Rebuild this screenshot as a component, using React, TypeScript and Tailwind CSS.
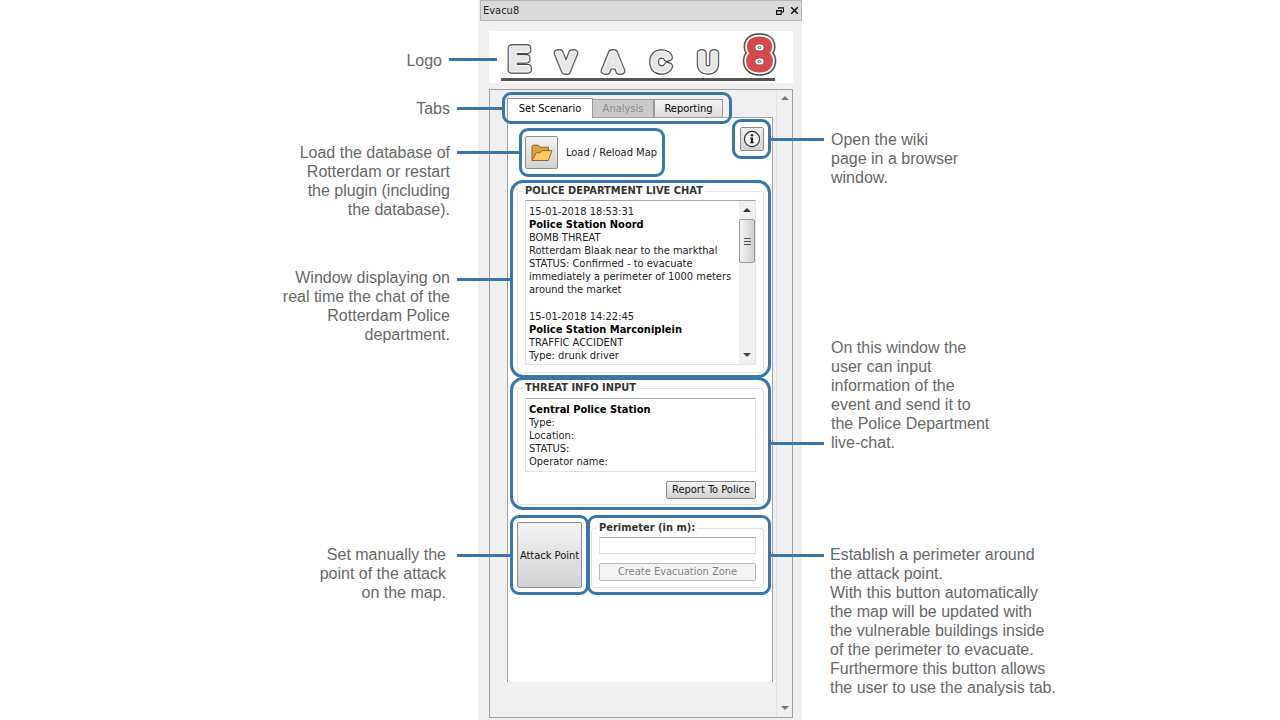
import type { ReactNode } from "react";

const ring = "border-3 border-[#3a75ab]";
const connector = "absolute h-[3px] bg-[#3a75ab]";
const buttonFace =
  "border border-[#8c8c8c] bg-linear-to-b from-[#f3f3f3] to-[#d2d2d2] text-[#111]";

function Note({ lines, className }: { lines: string[]; className: string }) {
  return (
    <p className={className}>
      {lines.map((line) => (
        <span key={line} className="block whitespace-nowrap">
          {line}
        </span>
      ))}
    </p>
  );
}

function Group({ title, className, children }: { title: string; className: string; children: ReactNode }) {
  return (
    <fieldset className={`min-w-0 rounded-[3px] border border-[#dfe3e8] px-[7px] ${className}`}>
      <legend className="-ml-[2px] px-[2px] leading-[14px] font-bold whitespace-nowrap text-[#333]">{title}</legend>
      {children}
    </fieldset>
  );
}

function Arrow({ up, className }: { up?: boolean; className: string }) {
  return (
    <svg viewBox="0 0 8 4" className={`h-1 w-2 ${className}`} aria-hidden="true">
      <path d={up ? "M0 4 L4 0 L8 4Z" : "M0 0 L4 4 L8 0Z"} fill="currentColor" />
    </svg>
  );
}

function Logo() {
  return (
    <svg viewBox="0 0 304 52" className="block w-full" role="img" aria-label="Evacu8">
      <defs>
        <g id="word" textAnchor="middle" fontFamily="Liberation Sans, Arial, sans-serif" strokeLinejoin="round">
          <text x="30" y="39" fontSize="31">E</text>
          <text x="77" y="40" fontSize="26">V</text>
          <text x="124" y="40" fontSize="26">A</text>
          <text x="172" y="40" fontSize="26">C</text>
          <text x="219" y="40" fontSize="26">U</text>
        </g>
        <g id="digit" textAnchor="middle" fontFamily="Liberation Sans, Arial, sans-serif" strokeLinejoin="round">
          <text x="270.5" y="38.5" fontSize="44" fontWeight="bold">8</text>
        </g>
      </defs>
      <rect x="12" y="47" width="274" height="3" fill="#555" />
      <use href="#word" fill="#444" stroke="#444" strokeWidth="7.4" />
      <use href="#word" fill="#f8f8f8" stroke="#f8f8f8" strokeWidth="5" />
      <use href="#word" fill="#e6e6e6" stroke="#e6e6e6" strokeWidth="2.6" />
      <use href="#digit" fill="#3f4448" stroke="#3f4448" strokeWidth="11.5" />
      <use href="#digit" fill="#fff" stroke="#fff" strokeWidth="8.5" />
      <use href="#digit" fill="#d8474b" stroke="#d8474b" strokeWidth="5" />
      <g fill="#fff" stroke="#666" strokeWidth="1">
        <ellipse cx="270.5" cy="16.5" rx="4.6" ry="3.5" />
        <ellipse cx="270.5" cy="30.5" rx="4.6" ry="3.5" />
      </g>
      <g fill="#ccc" stroke="#777" strokeWidth="0.9">
        <ellipse cx="270.5" cy="16.5" rx="1.9" ry="1.2" />
        <ellipse cx="270.5" cy="30.5" rx="1.9" ry="1.2" />
      </g>
    </svg>
  );
}

function ChatBox() {
  return (
    <div className="flex h-[165px] border border-[#e3e3e3] border-t-[#a5a5a5] bg-white">
      <div className="min-w-0 flex-1 overflow-hidden pt-1 pl-[3px] whitespace-nowrap">
        <p>15-01-2018 18:53:31</p>
        <p className="font-bold text-black">Police Station Noord</p>
        <p>BOMB THREAT</p>
        <p>Rotterdam Blaak near to the markthal</p>
        <p>STATUS: Confirmed - to evacuate</p>
        <p>immediately a perimeter of 1000 meters</p>
        <p>around the market</p>
        <p className="mt-[14px]">15-01-2018 14:22:45</p>
        <p className="font-bold text-black">Police Station Marconiplein</p>
        <p>TRAFFIC ACCIDENT</p>
        <p>Type: drunk driver</p>
      </div>
      <div className="flex w-4 shrink-0 flex-col items-center bg-[#f0f0f0] pt-[7px] pb-[7px]">
        <Arrow up className="text-[#333]" />
        <div className="mt-[7px] flex h-[44px] w-4 flex-col items-center justify-center gap-[2px] rounded-[2px] border border-[#979797] bg-linear-to-r from-[#f5f5f5] to-[#cfcfcf]">
          <span className="h-px w-[7px] bg-[#555]" />
          <span className="h-px w-[7px] bg-[#555]" />
          <span className="h-px w-[7px] bg-[#555]" />
        </div>
        <Arrow className="mt-auto text-[#444]" />
      </div>
    </div>
  );
}

function TabPage() {
  return (
    <div className="h-[565px] border-x border-t border-[#a0a0a8] bg-white pt-px pr-px pl-[2px]">
      <div className="flex items-start justify-between pb-[3px]">
        <div className={`relative mt-[9px] ml-[9px] flex h-[49px] w-[146px] items-center rounded-[9px] pl-[3px] ${ring}`}>
          <span className={`${connector} right-full w-[65px]`} />
          <button id="load" className={`flex size-[33px] items-center justify-center rounded-[2px] ${buttonFace}`}>
            <svg viewBox="0 0 22 18" className="h-[18px] w-[22px]" aria-hidden="true">
              <path d="M1 16.5V2.5L2 1.2H7.5L9.3 3.2H17.5V7" fill="#dda043" stroke="#8a6428" strokeWidth="1" strokeLinejoin="round" />
              <path d="M1 16.5L5.2 8.8H9L11 6.6H21L17.3 16.5Z" fill="#fdc963" stroke="#8a6428" strokeWidth="1" strokeLinejoin="round" />
            </svg>
          </button>
          <label htmlFor="load" className="ml-2 whitespace-nowrap">Load / Reload Map</label>
        </div>
        <div className={`relative flex h-[40px] w-[39px] items-center justify-center rounded-[9px] ${ring}`}>
          <span className={`${connector} left-full w-[56px]`} />
          <button aria-label="Open wiki" className={`flex size-6 items-center justify-center rounded-[2px] ${buttonFace}`}>
            <svg viewBox="0 0 18 18" className="size-[18px]" aria-hidden="true">
              <circle cx="9" cy="9" r="7.6" fill="#f6f6f6" stroke="#333" strokeWidth="1.2" />
              <circle cx="9" cy="5.2" r="1.3" fill="#222" />
              <path d="M7 7.4H10.1V12.2H11.2V13.2H6.9V12.2H8V8.4H7Z" fill="#222" />
            </svg>
          </button>
        </div>
      </div>

      <section className={`relative h-[198px] rounded-[13px] px-1 pt-px ${ring}`}>
        <span className={`${connector} top-[95px] right-full w-[56px]`} />
        <Group title="POLICE DEPARTMENT LIVE CHAT" className="pt-[2px] pb-[7px]">
          <ChatBox />
        </Group>
      </section>

      <section className={`relative -mt-px h-[133px] rounded-[13px] px-1 pt-px ${ring}`}>
        <span className={`${connector} top-[62px] left-full w-[56px]`} />
        <Group title="THREAT INFO INPUT" className="pt-[3px] pb-[5px]">
          <div className="h-[74px] border border-[#e3e3e3] border-t-[#a5a5a5] pt-1 pl-[3px]">
            <label htmlFor="threat" className="block font-bold text-black">Central Police Station</label>
            <textarea
              id="threat"
              rows={4}
              className="block w-full resize-none overflow-hidden outline-none"
              defaultValue={"Type:\nLocation:\nSTATUS:\nOperator name:"}
            />
          </div>
          <button className={`mt-[9px] ml-auto block h-[18px] w-[90px] rounded-[2px] leading-[14px] whitespace-nowrap ${buttonFace}`}>
            Report To Police
          </button>
        </Group>
      </section>

      <div className="mt-[5px] flex">
        <section className={`relative h-[80px] w-[79px] shrink-0 rounded-[9px] p-1 ${ring}`}>
          <span className={`${connector} top-[36px] right-full w-[56px]`} />
          <button className={`size-full rounded-[2px] whitespace-nowrap ${buttonFace}`}>Attack Point</button>
        </section>
        <section className={`relative -ml-[2px] h-[80px] min-w-0 flex-1 rounded-[9px] pt-[3px] pr-1 pl-px ${ring}`}>
          <span className={`${connector} top-[36px] left-full w-[56px]`} />
          <Group title="Perimeter (in m):" className="pt-[2px] pb-[6px]">
            <input
              type="text"
              aria-label="Perimeter (in m)"
              className="block h-[17px] w-full border border-[#e0e0e0] border-t-[#a5a5a5] px-1 outline-none"
            />
            <button disabled className="mt-[9px] block h-[18px] w-full rounded-[2px] border border-[#b8b8b8] bg-[#f4f4f4] leading-[14px] whitespace-nowrap text-[#838383]">
              Create Evacuation Zone
            </button>
          </Group>
        </section>
      </div>
    </div>
  );
}

function PluginPanel() {
  return (
    <main className="flex min-h-screen w-[324px] shrink-0 flex-col bg-[#f0f0f0] pb-[2px] font-['DejaVu_Sans_Condensed','DejaVu_Sans',sans-serif] text-[11px] leading-[13px] text-[#222]">
      <header className="ml-[2px] flex h-[21px] items-center border border-[#b4b4b4] bg-[#dadada] pr-[2px] pl-[2px]">
        <h1 className="flex-1">Evacu8</h1>
        <button aria-label="Float panel" className="mr-[6px]">
          <svg viewBox="0 0 8 8" className="size-2" aria-hidden="true">
            <path d="M2.5 2V0.8H7.5V5H6M2 1H8" fill="none" stroke="#111" strokeWidth="1.2" />
            <path d="M0.6 3.6H5.2V7.4H0.6ZM0 3.8H6" fill="none" stroke="#111" strokeWidth="1.2" />
          </svg>
        </button>
        <button aria-label="Close panel">
          <svg viewBox="0 0 9 9" className="size-[9px]" aria-hidden="true">
            <path d="M1.2 1.2L7.8 7.8M7.8 1.2L1.2 7.8" stroke="#111" strokeWidth="1.6" />
          </svg>
        </button>
      </header>

      <div className="relative mx-[9px] mt-[10px] ml-[11px] bg-white">
        <span className={`${connector} top-[27px] right-[296px] w-[48px]`} />
        <Logo />
      </div>

      <div className="mx-[9px] mt-[6px] ml-[11px] flex flex-1 border border-[#9d9da6]">
        <div className="min-w-0 flex-1 pt-2 pr-[3px] pl-[17px]">
          <nav className="relative flex h-[19px] w-[216px] items-end">
            <button className="relative -mb-px h-5 w-[86px] border border-b-0 border-[#9a9a9a] bg-white pb-px whitespace-nowrap text-black">
              Set Scenario
            </button>
            <button disabled className="h-[18px] w-[61px] border border-b-0 border-l-0 border-[#9a9a9a] bg-[#c9cacb] text-[#8a8a8a]">
              Analysis
            </button>
            <button className="h-[18px] flex-1 border border-b-0 border-[#9a9a9a] bg-linear-to-b from-[#f4f4f4] to-[#dcdcdc] text-black">
              Reporting
            </button>
            <div className={`pointer-events-none absolute -top-[6px] -right-[9px] -bottom-[7px] -left-[5px] z-10 rounded-[9px] ${ring}`}>
              <span className={`${connector} top-[12px] right-full w-[48px]`} />
            </div>
          </nav>
          <TabPage />
        </div>
        <div className="flex w-4 shrink-0 flex-col items-center justify-between border-l border-[#e2e2e2] pt-[6px] pb-[7px] text-[#777]">
          <Arrow up className="" />
          <Arrow className="" />
        </div>
      </div>
    </main>
  );
}

export default function App() {
  return (
    <div className="flex min-h-screen bg-white font-['Liberation_Sans',Arial,sans-serif] text-base leading-[19px] text-[#686868]">
      <aside className="min-w-0 flex-1 pr-7 text-right">
        <Note className="mt-[51px] mr-2" lines={["Logo"]} />
        <Note className="mt-[29px]" lines={["Tabs"]} />
        <Note
          className="mt-[25px]"
          lines={["Load the database of", "Rotterdam or restart", "the plugin (including", "the database)."]}
        />
        <Note
          className="mt-[49px]"
          lines={["Window displaying on", "real time the chat of the", "Rotterdam Police", "department."]}
        />
        <Note className="mt-[201px] mr-1" lines={["Set manually the", "point of the attack", "on the map."]} />
      </aside>
      <PluginPanel />
      <aside className="min-w-0 flex-1 pl-7">
        <Note className="mt-[130px] ml-px" lines={["Open the wiki", "page in a browser", "window."]} />
        <Note
          className="mt-[151px] ml-px"
          lines={[
            "On this window the",
            "user can input",
            "information of the",
            "event and send it to",
            "the Police Department",
            "live-chat.",
          ]}
        />
        <Note
          className="mt-[93px]"
          lines={[
            "Establish a perimeter around",
            "the attack point.",
            "With this button automatically",
            "the map will be updated with",
            "the vulnerable buildings inside",
            "of the perimeter to evacuate.",
            "Furthermore this button allows",
            "the user to use the analysis tab.",
          ]}
        />
      </aside>
    </div>
  );
}
